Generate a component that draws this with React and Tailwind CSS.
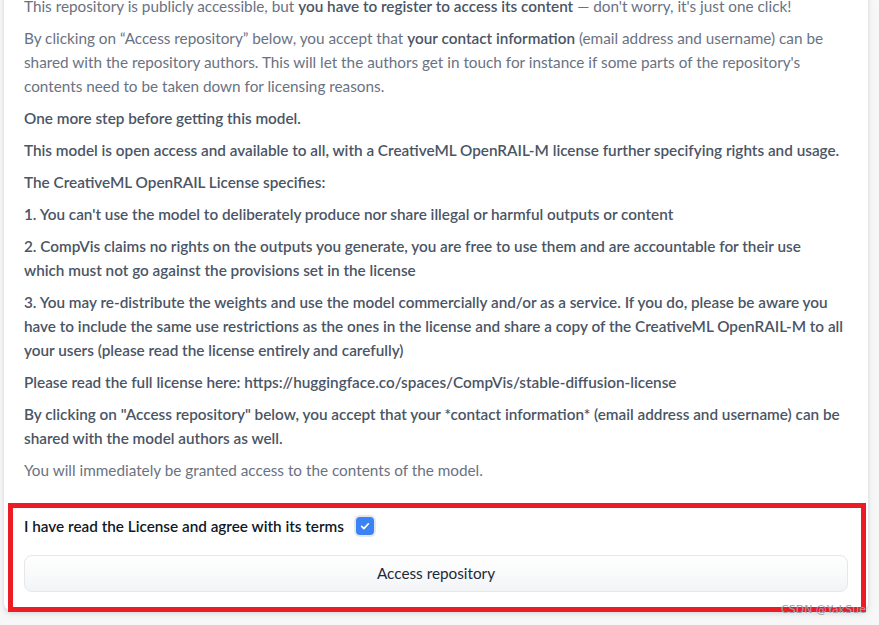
import React from 'react';

const font = { fontFamily: '"Source Sans Pro", Lato, "Noto Sans", sans-serif' };

const Para = ({ children, className = '' }) => (
  <p className={`mb-2 leading-6 ${className}`}>{children}</p>
);

export default function App() {
  return (
    <div className="relative h-[625px] w-[879px] overflow-hidden bg-[#f7f7f8]" style={font}>
      {/* Card */}
      <div className="ml-[3px] w-[866px] rounded-b-lg border border-t-0 border-gray-200 bg-white shadow-md">
        <div className="-mt-[6px] px-5 pt-0 text-[15.3px] text-gray-500">
          <Para>
            This repository is publicly accessible, but{' '}
            <strong className="font-semibold text-gray-600">you have to register to access its content</strong> — don't worry, it's just one click!
          </Para>
          <Para>
            By clicking on “Access repository” below, you accept that{' '}
            <strong className="font-semibold text-gray-600">your contact information</strong> (email address and username) can be shared with the repository authors. This will let the authors get in touch for instance if some parts of the repository's contents need to be taken down for licensing reasons.
          </Para>
          <div className="font-semibold text-gray-600">
            <Para>One more step before getting this model.</Para>
            <Para>This model is open access and available to all, with a CreativeML OpenRAIL-M license further specifying rights and usage.</Para>
            <Para>The CreativeML OpenRAIL License specifies:</Para>
            <Para>1. You can't use the model to deliberately produce nor share illegal or harmful outputs or content</Para>
            <Para>
              2. CompVis claims no rights on the outputs you generate, you are free to use them and are accountable for their use
              <br />
              which must not go against the provisions set in the license
            </Para>
            <Para>3. You may re-distribute the weights and use the model commercially and/or as a service. If you do, please be aware you have to include the same use restrictions as the ones in the license and share a copy of the CreativeML OpenRAIL-M to all your users (please read the license entirely and carefully)</Para>
            <Para>Please read the full license here: https://huggingface.co/spaces/CompVis/stable-diffusion-license</Para>
            <Para>By clicking on "Access repository" below, you accept that your *contact information* (email address and username) can be shared with the model authors as well.</Para>
          </div>
          <Para>You will immediately be granted access to the contents of the model.</Para>
        </div>

        {/* Form */}
        <div className="px-5 pt-[25px] pb-[18px]">
          <label className="flex items-center gap-[12px] text-[15.3px] font-semibold text-gray-900">
            I have read the License and agree with its terms
            <span className="flex h-[18px] w-[18px] items-center justify-center rounded-[4px] bg-[#3b82f6] ring-2 ring-gray-200">
              <svg viewBox="0 0 16 16" className="h-3 w-3" fill="none" stroke="white" strokeWidth="2.2" strokeLinecap="round" strokeLinejoin="round">
                <path d="M3.5 8.5l3 3 6-6.5" />
              </svg>
            </span>
          </label>
          <button className="mt-[17px] h-[37px] w-full rounded-lg border border-gray-200 bg-gradient-to-b from-white to-gray-100 text-[15.3px] text-gray-800">
            Access repository
          </button>
        </div>
      </div>

      {/* Red annotation box */}
      <div className="absolute left-[8px] top-[503px] h-[109px] w-[858px] border-[5px] border-[#ec1c24]" />

      {/* Watermark */}
      <span className="absolute left-[781px] top-[604px] text-[11px] leading-none text-gray-400" style={{ fontFamily: '"DejaVu Sans", sans-serif' }}>
        CSDN @YakSue
      </span>
    </div>
  );
}
